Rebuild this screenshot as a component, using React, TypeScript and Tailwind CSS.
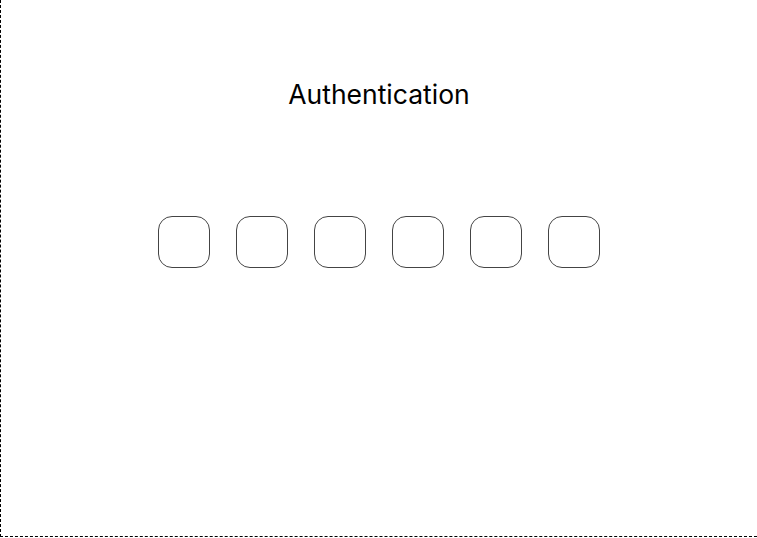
import React from 'react';

const CODE_LENGTH = 6;

const App: React.FC = () => {
  return (
    <div
      className="h-[537px] w-full border-l border-b border-dashed border-black bg-white"
      style={{ fontFamily: 'Inter, "Noto Sans", sans-serif' }}
    >
      <div className="flex flex-col items-center pt-[78px]">
        {/* Title */}
        <h1 className="text-[26.5px] leading-8 font-normal text-black">Authentication</h1>

        {/* Code inputs */}
        <div className="mt-[106px] flex gap-[26px]">
          {Array.from({ length: CODE_LENGTH }).map((_, i) => (
            <input
              key={i}
              type="text"
              maxLength={1}
              aria-label={`Digit ${i + 1}`}
              className="h-[52px] w-[52px] rounded-[14px] border border-[#444] bg-white text-center text-xl outline-none"
            />
          ))}
        </div>
      </div>
    </div>
  );
};

export default App;
